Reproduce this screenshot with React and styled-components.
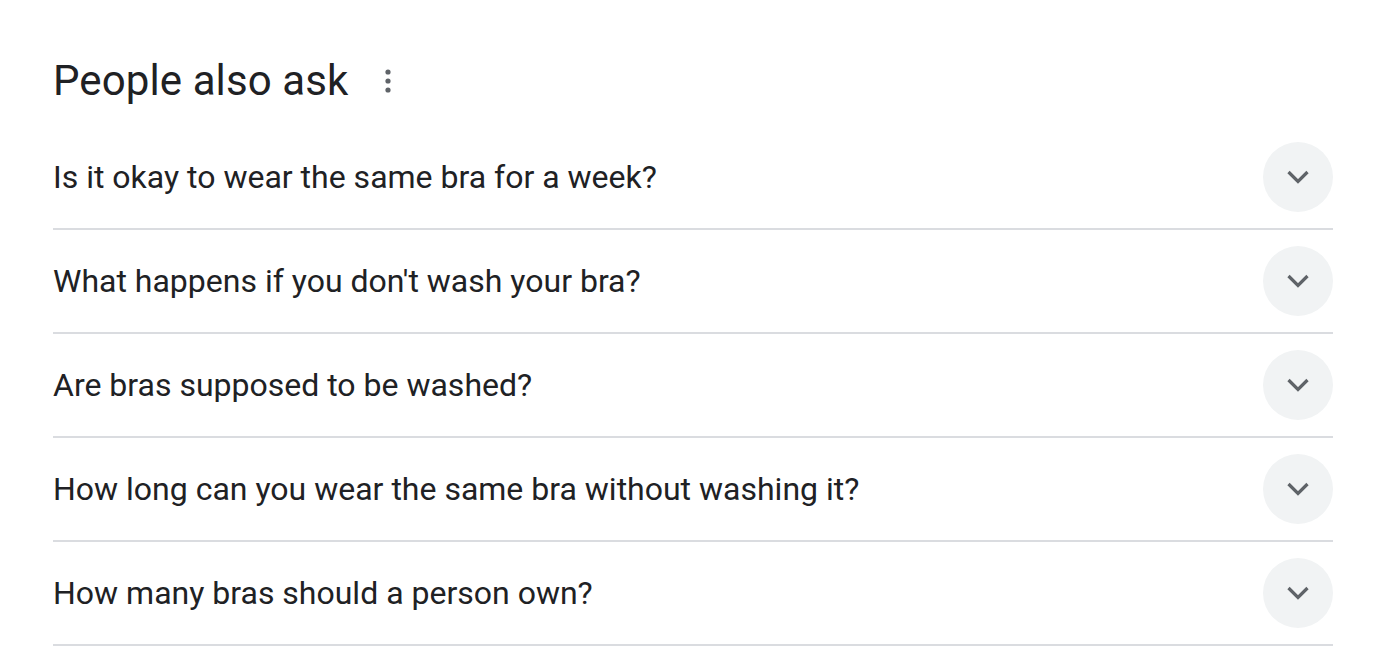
import styled, { createGlobalStyle } from "styled-components";

const GlobalStyle = createGlobalStyle`
  body {
    margin: 0;
    background: #fff;
    font-family: Roboto, "Liberation Sans", Arial, sans-serif;
    color: #202124;
  }
`;

const Wrapper = styled.div`
  padding: 0 67px 0 53px;
`;

const Header = styled.div`
  height: 126px;
  box-sizing: border-box;
  padding-top: 55px;
  display: flex;
  align-items: flex-start;
  gap: 30px;
`;

const Title = styled.h2`
  margin: 0;
  font-size: 42px;
  line-height: 52px;
  font-weight: 400;
  letter-spacing: 0.1px;
  color: #202124;
`;

const MoreButton = styled.div`
  width: 20px;
  height: 52px;
  display: flex;
  align-items: center;
  justify-content: center;
  color: #5f6368;
`;

const Row = styled.div`
  height: 102px;
  display: flex;
  align-items: center;
  justify-content: space-between;
  border-bottom: 2px solid #dadce0;
`;

const Question = styled.span`
  font-size: 32px;
  line-height: 40px;
  color: #202124;
`;

const Toggle = styled.div`
  width: 70px;
  height: 70px;
  border-radius: 50%;
  background: #f1f3f4;
  display: flex;
  align-items: center;
  justify-content: center;
  color: #5f6368;
`;

const questions = [
  "Is it okay to wear the same bra for a week?",
  "What happens if you don't wash your bra?",
  "Are bras supposed to be washed?",
  "How long can you wear the same bra without washing it?",
  "How many bras should a person own?",
];

const Kebab = () => (
  <svg width="8" height="24" viewBox="0 0 8 24">
    <circle cx="4" cy="3" r="2.6" fill="currentColor" />
    <circle cx="4" cy="12" r="2.6" fill="currentColor" />
    <circle cx="4" cy="21" r="2.6" fill="currentColor" />
  </svg>
);

const Chevron = () => (
  <svg width="24" height="24" viewBox="0 0 24 24">
    <path
      d="M2.5 7 L12 16.5 L21.5 7"
      fill="none"
      stroke="currentColor"
      strokeWidth="3.2"
    />
  </svg>
);

export default function App() {
  return (
    <>
      <GlobalStyle />
      <Wrapper>
        <Header>
          <Title>People also ask</Title>
          <MoreButton>
            <Kebab />
          </MoreButton>
        </Header>
        {questions.map((q) => (
          <Row key={q}>
            <Question>{q}</Question>
            <Toggle>
              <Chevron />
            </Toggle>
          </Row>
        ))}
      </Wrapper>
    </>
  );
}
